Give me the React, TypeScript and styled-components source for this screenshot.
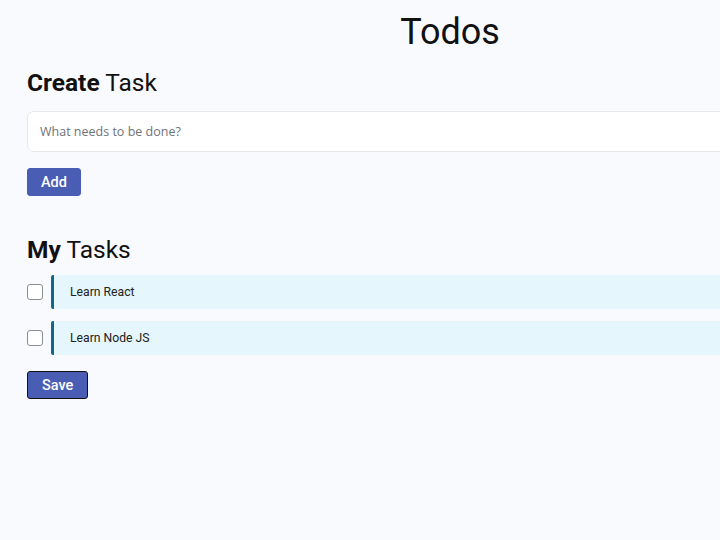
import styled, { createGlobalStyle } from "styled-components";

const GlobalStyle = createGlobalStyle`
  html, body {
    margin: 0;
    padding: 0;
    background: #f9fafe;
    font-family: Roboto, "Liberation Sans", sans-serif;
    color: #111;
  }
`;

const Page = styled.main`
  width: 900px;
  box-sizing: border-box;
  padding: 11px 27px 40px;
`;

const Title = styled.h1`
  margin: 0;
  font-size: 36px;
  line-height: 42px;
  font-weight: 400;
  text-align: center;
`;

const SectionTitle = styled.h2<{ $top: number }>`
  margin: ${(p) => p.$top}px 0 0;
  font-size: 24.5px;
  line-height: 28px;
  font-weight: 400;
  > b {
    font-weight: 700;
  }
`;

const TaskInput = styled.input`
  display: block;
  width: 100%;
  box-sizing: border-box;
  height: 41px;
  margin-top: 14px;
  padding: 0 12px;
  border: 1px solid #e6e8ec;
  border-radius: 7px;
  background: #fff;
  font-family: "Open Sans", sans-serif;
  font-size: 12.5px;
  color: #333;
  outline: none;
  &::placeholder {
    color: #6f737a;
  }
`;

const Button = styled.button<{ $outlined?: boolean }>`
  display: block;
  margin-top: 16px;
  height: 28px;
  padding: 0 ${(p) => (p.$outlined ? 14 : 13)}px;
  border: 1px solid ${(p) => (p.$outlined ? "#111" : "#4a5db4")};
  border-radius: 3px;
  background: #4a5db4;
  color: #fff;
  font-family: Roboto, sans-serif;
  font-size: 14.5px;
  font-weight: 500;
  cursor: pointer;
`;

const TaskList = styled.ul`
  list-style: none;
  margin: 11px 0 0;
  padding: 0;
  display: flex;
  flex-direction: column;
  gap: 12px;
`;

const TaskRow = styled.li`
  display: flex;
  align-items: center;
  gap: 8px;
`;

const Check = styled.input`
  appearance: none;
  margin: 0;
  width: 16px;
  height: 16px;
  border: 1px solid #8a8d92;
  border-radius: 3px;
  background: #fff;
  flex-shrink: 0;
`;

const TaskLabel = styled.div`
  flex: 1;
  height: 34px;
  display: flex;
  align-items: center;
  padding-left: 16px;
  border-left: 3px solid #0d6a8c;
  border-radius: 2px 0 0 2px;
  background: #e5f6fd;
  font-size: 12.2px;
  color: #222;
`;

const tasks = ["Learn React", "Learn Node JS"];

export default function App() {
  return (
    <>
      <GlobalStyle />
      <Page>
        <Title>Todos</Title>
        <SectionTitle $top={16}>
          <b>Create</b> Task
        </SectionTitle>
        <TaskInput placeholder="What needs to be done?" />
        <Button>Add</Button>

        <SectionTitle $top={40}>
          <b>My</b> Tasks
        </SectionTitle>
        <TaskList>
          {tasks.map((t) => (
            <TaskRow key={t}>
              <Check type="checkbox" />
              <TaskLabel>{t}</TaskLabel>
            </TaskRow>
          ))}
        </TaskList>
        <Button $outlined>Save</Button>
      </Page>
    </>
  );
}
